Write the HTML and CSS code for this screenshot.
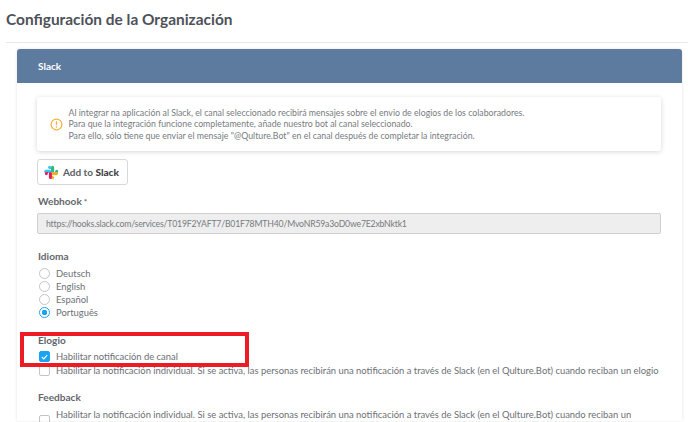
FILE: index.html
```html
<!DOCTYPE html>
<html lang="es">
<head>
    <meta charset="UTF-8">
    <title>Configuración de la Organización</title>
    <link rel="stylesheet" href="styles.css">
</head>
<body>

<h1 class="page-title">Configuración de la Organización</h1>

<div class="card">
    <div class="card-header">Slack</div>
    <div class="card-body">
        <div class="alert">
            <svg class="alert-icon" viewBox="0 0 14 14" width="13" height="13">
                <circle cx="7" cy="7" r="5.8" fill="none" stroke="#f5b041" stroke-width="1.3"/>
                <rect x="6.3" y="3.6" width="1.4" height="4.2" fill="#f5b041"/>
                <rect x="6.3" y="9" width="1.4" height="1.4" fill="#f5b041"/>
            </svg>
            <div>
                <div>Al integrar na aplicación al Slack, el canal seleccionado recibirá mensajes sobre el envio de elogios de los colaboradores.</div>
                <div>Para que la integración funcione completamente, añade nuestro bot al canal seleccionado.</div>
                <div>Para ello, sólo tiene que enviar el mensaje "@Qulture.Bot" en el canal después de completar la integración.</div>
            </div>
        </div>

        <div class="slack-btn">
            <svg viewBox="0 0 54 54" width="15" height="15">
                <path fill="#36c5f0" d="M20 3a5.500 5.500 0 0 0 0 11h5.500V8.500A5.500 5.500 0 0 0 20 3zM20 17.500H6a5.500 5.500 0 0 0 0 11h14a5.500 5.500 0 0 0 0-11z"/>
                <path fill="#2eb67d" d="M51 23a5.500 5.500 0 0 0-11 0v5.500h5.500A5.500 5.500 0 0 0 51 23zM36.500 23V8.500a5.500 5.500 0 0 0-11 0V23a5.500 5.500 0 0 0 11 0z"/>
                <path fill="#ecb22e" d="M31 51a5.500 5.500 0 0 0 0-11h-5.500v5.500A5.500 5.500 0 0 0 31 51zM31 36.500h14a5.500 5.500 0 0 0 0-11H31a5.500 5.500 0 0 0 0 11z"/>
                <path fill="#e01e5a" d="M3 31a5.500 5.500 0 0 0 11 0v-5.500H8.500A5.500 5.500 0 0 0 3 31zM17.500 31v14a5.500 5.500 0 0 0 11 0V31a5.500 5.500 0 0 0-11 0z"/>
            </svg>
            <span>Add to <b>Slack</b></span>
        </div>

        <div class="label webhook-label">Webhook<span class="req">*</span></div>
        <div class="input">https://hooks.slack.com/services/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</div>

        <div class="label idioma-label">Idioma</div>
        <div class="radio-list">
            <div class="option"><span class="radio"></span>Deutsch</div>
            <div class="option"><span class="radio"></span>English</div>
            <div class="option"><span class="radio"></span>Español</div>
            <div class="option"><span class="radio checked"></span>Português</div>
        </div>

        <div class="label elogio-label">Elogio</div>
        <div class="option check-row first-check">
            <span class="check checked">
                <svg viewBox="0 0 10 10" width="10" height="10"><path d="M2 5l2.200 2.200L8 3" fill="none" stroke="#fff" stroke-width="1.2"/></svg>
            </span>
            Habilitar notificación de canal
        </div>
        <div class="option check-row">
            <span class="check"></span>
            Habilitar la notificación individual. Si se activa, las personas recibirán una notificación a través de Slack (en el Qulture.Bot) cuando reciban un elogio
        </div>

        <div class="label feedback-label">Feedback</div>
        <div class="option check-row top-row">
            <span class="check low"></span>
            Habilitar la notificación individual. Si se activa, las personas recibirán una notificación a través de Slack (en el Qulture.Bot) cuando reciban un
        </div>
    </div>
</div>

<div class="highlight"></div>

</body>
</html>
```

FILE: styles.css
```css
html, body {
    height: 100%;
    margin: 0;
    overflow: hidden;
    background: #fff;
}
body {
    font-family: "Lato", "Noto Sans", sans-serif;
    color: #6b6f75;
    position: relative;
}
.page-title {
    margin: 0 0 6px 6px;
    padding: 9px 0 12px;
    border-bottom: 1px solid #e8e8e8;
    font-size: 15.450px;
    line-height: 21px;
    font-weight: 700;
    color: #4d5259;
}
.card {
    margin: 0 6px 0 17px;
    border-radius: 3px 3px 0 0;
    box-shadow: 0 0 3px rgba(0, 0, 0, 0.12);
}
.card-header {
    height: 34px;
    line-height: 34px;
    padding-left: 21px;
    background: #5d7a9f;
    color: #fff;
    font-size: 10px;
    font-weight: 700;
    border-radius: 3px 3px 0 0;
}
.card-body {
    padding: 14px 21px 0 20px;
    font-size: 9.400px;
}
.alert {
    display: flex;
    align-items: center;
    gap: 5.500px;
    height: 54px;
    padding-left: 13px;
    box-sizing: border-box;
    border-radius: 3px;
    box-shadow: 0 1px 5px rgba(0, 0, 0, 0.16);
    line-height: 11.500px;
    font-size: 8.770px;
    color: #777b80;
}
.alert-icon {
    flex: none;
}
.slack-btn {
    display: flex;
    align-items: center;
    gap: 4px;
    width: 91px;
    height: 26px;
    box-sizing: border-box;
    margin-top: 8px;
    padding-left: 6px;
    border: 1px solid #d8d8d8;
    border-radius: 3px;
    font-size: 10px;
    font-weight: 700;
    color: #5a5e63;
}
.slack-btn b {
    color: #3f4347;
}
.label {
    padding-left: 1px;
    font-size: 10.100px;
    line-height: 13px;
    font-weight: 700;
    color: #63676c;
}
.req {
    margin-left: 2px;
    font-size: 8px;
}
.webhook-label {
    margin-top: 10px;
}
.input {
    margin-top: 4px;
    height: 21px;
    box-sizing: border-box;
    line-height: 19px;
    padding-left: 8px;
    background: #eeeeee;
    border: 1px solid #cfcfcf;
    border-radius: 2px;
    font-size: 8.700px;
    letter-spacing: -0.190px;
    color: #777b80;
}
.idioma-label {
    margin-top: 16px;
}
.radio-list {
    margin-top: 4px;
}
.option {
    display: flex;
    align-items: center;
    height: 13px;
    font-size: 9.420px;
    white-space: nowrap;
}
.radio {
    box-sizing: border-box;
    width: 11px;
    height: 11px;
    margin: 0 6px 0 2px;
    border: 1px solid #c4c4c4;
    border-radius: 50%;
    flex: none;
}
.radio.checked {
    border-color: #1aa3f0;
    background: radial-gradient(circle, #1aa3f0 0 2.500px, #fff 3px);
}
.elogio-label {
    margin-top: 15px;
}
.check-row {
    height: 14px;
}
.first-check {
    margin-top: 2px;
}
.check {
    display: flex;
    box-sizing: border-box;
    width: 11px;
    height: 11px;
    margin: 0 6px 0 2px;
    border: 1px solid #c4c4c4;
    border-radius: 2px;
    flex: none;
}
.check.checked {
    border-color: #1aa3f0;
    background: #1aa3f0;
}
.check.low {
    align-self: flex-start;
    margin-top: 8px;
}
.feedback-label {
    margin-top: 14px;
}
.top-row {
    margin-top: 3px;
}
.highlight {
    position: absolute;
    left: 20px;
    top: 332px;
    width: 229px;
    height: 35px;
    box-sizing: border-box;
    border: 4px solid #ed1c24;
}
```
